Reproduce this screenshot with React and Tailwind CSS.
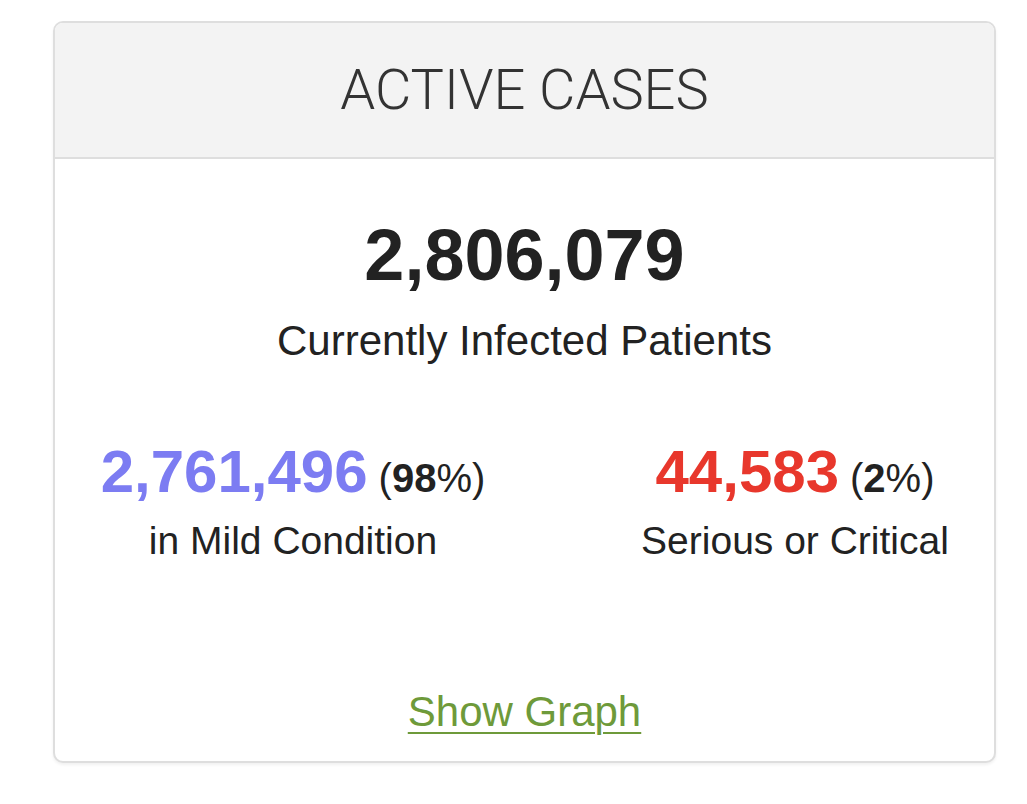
import React from 'react';

const stats = [
    { value: '2,761,496', pct: '98', label: 'in Mild Condition', color: 'text-[#7c7cf2]' },
    { value: '44,583', pct: '2', label: 'Serious or Critical', color: 'text-[#e8372c]' },
];

const ActiveCases = () => {
    return (
        <div className="min-h-[804px] bg-white pt-[21px] pl-[53px] pr-[31px]" style={{ fontFamily: '"Liberation Sans", Arial, sans-serif' }}>
            <div className="w-[943px] h-[742px] rounded-[10px] border-2 border-[#dedede] bg-white shadow-[0_2px_3px_rgba(0,0,0,0.06)] overflow-hidden flex flex-col">
                <div className="h-[136px] bg-[#f3f3f3] border-b-2 border-[#dedede] flex items-center justify-center">
                    <h2 className="text-[56px] font-light text-[#333] leading-none" style={{ fontFamily: 'Roboto, "Liberation Sans", sans-serif' }}>
                        ACTIVE CASES
                    </h2>
                </div>

                <div className="flex flex-col items-center text-[#222]">
                    <div className="mt-[60px] text-[72px] font-bold leading-none">2,806,079</div>
                    <div className="mt-[29px] text-[42px] leading-none">Currently Infected Patients</div>
                </div>

                <div className="flex pl-[43px] gap-[112px] mt-[80px]">
                    {stats.map((s) => (
                        <div key={s.label} className="w-[390px] shrink-0 flex flex-col items-center text-[#222] whitespace-nowrap">
                            <div className="leading-none">
                                <span className={`text-[60px] font-bold ${s.color}`}>{s.value}</span>
                                <span className="text-[40px] ml-[11px]">(<b>{s.pct}</b>%)</span>
                            </div>
                            <div className="mt-[19px] text-[39px] leading-none">{s.label}</div>
                        </div>
                    ))}
                </div>

                <div className="mt-auto mb-[28px] flex justify-center">
                    <a href="#" className="text-[42px] leading-none text-[#6e9a3a] underline underline-offset-[6px] decoration-2">
                        Show Graph
                    </a>
                </div>
            </div>
        </div>
    );
};

export default ActiveCases;
